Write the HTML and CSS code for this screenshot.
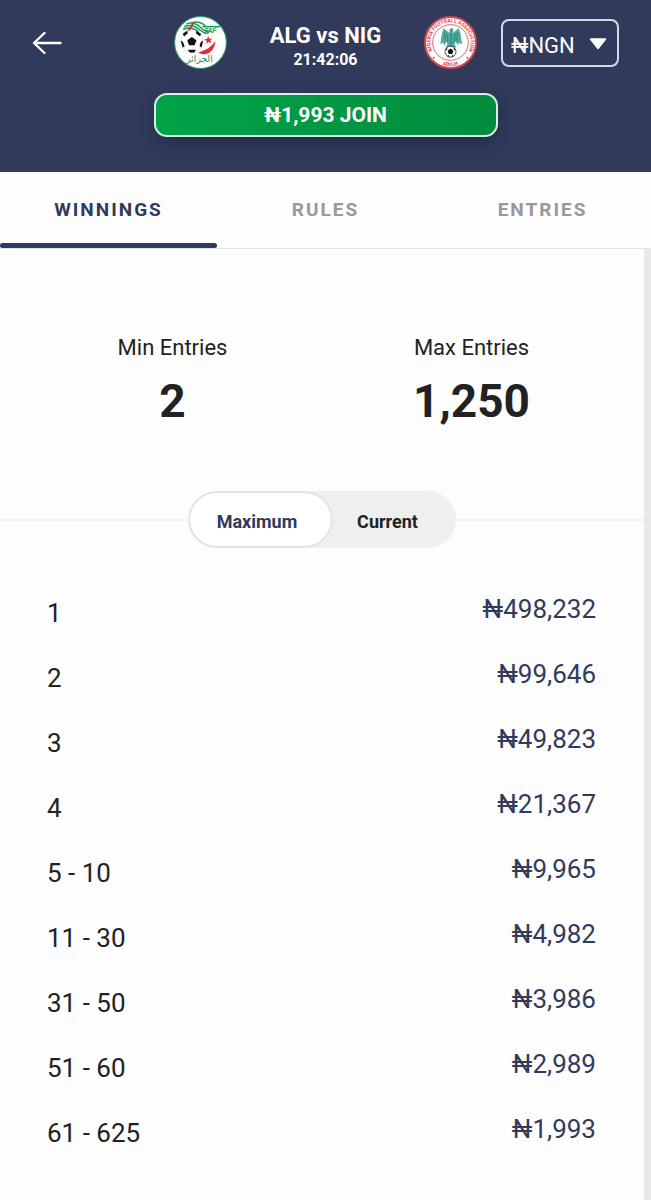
FILE: index.html
```html
<!DOCTYPE html>
<html lang="en">
<head>
    <meta charset="UTF-8">
    <meta name="viewport" content="width=device-width, initial-scale=1.0">
    <title>ALG vs NIG</title>
    <link rel="stylesheet" href="styles.css">
</head>
<body>
    <header>
        <div class="match-bar">
            <button type="button" class="back" aria-label="Back">
                <svg width="30" height="24" viewBox="0 0 30 24" fill="none" stroke="#fff" stroke-width="2.4" stroke-linecap="round" stroke-linejoin="round">
                    <path d="M28.5 12H2M12.500 2L2 12L12.500 22"/>
                </svg>
            </button>

            <div class="match">
                <svg class="crest" viewBox="0 0 52 52" role="img" aria-label="Algeria">
                    <circle cx="26" cy="26" r="25.4" fill="#fff" stroke="#2a9a6c" stroke-width="1"/>
                    <g fill="none" stroke="#1e9a59" stroke-width="1.5">
                        <path d="M12 8C18 5 23 8 27 12S33 15 34 15"/>
                        <path d="M10 10.500C17 8 21 10 26 14S31 17 34 16.500"/>
                        <path d="M9 13C16 10.500 20 12 24 15.500"/>
                        <path d="M17 6.500C23 5 28 7 31 10"/>
                    </g>
                    <text x="30" y="17" class="faf">FAF</text>
                    <path d="M28 10.500L45 10.500" stroke="#1e9a59" stroke-width="1.500"/>
                    <path d="M19 7L14 15" stroke="#e0303a" stroke-width="2"/>
                    <circle cx="17.500" cy="25" r="11" fill="#fff" stroke="#c9cfcd" stroke-width=".5"/>
                    <g fill="#111">
                        <path d="M17.500 20.500L22 23.700L20.300 28.700H14.700L13 23.700Z"/>
                        <path d="M8.500 17.500L13 14.500L13.500 17L10 20Z"/>
                        <path d="M22 14.500L26.500 17.500L25.500 20L21.500 17Z"/>
                        <path d="M6.500 24L8.800 25.500L10.500 30L8.500 31Z"/>
                        <path d="M28.500 24L26.300 25.500L25 29.500L27 31Z"/>
                        <path d="M13.500 33H21.500L20 35.800H15.500Z"/>
                    </g>
                    <path d="M24 35.500C31 34 37 30 40.500 24.500C40.500 32 35 38 29 37.500C26 37.300 25 36.500 24 35.500Z" fill="#e0303a"/>
                    <path d="M33.500 19.500L34.700 22.200L37.500 22L35.700 24L37 26.600L34.200 25.500L32 27.400L32.200 24.500L29.700 23L32.600 22.400Z" fill="#e0303a"/>
                    <text x="25" y="45" class="crest-arabic">الجزائر</text>
                </svg>

                <div class="match-info">
                    <h1>ALG vs NIG</h1>
                    <p>21:42:06</p>
                </div>

                <svg class="crest" viewBox="0 0 52 52" role="img" aria-label="Nigeria">
                    <defs>
                        <path id="ring-top" d="M12.800 40.600A19.700 19.700 0 1 1 39.200 40.600"/>
                        <path id="ring-bottom" d="M12 44.400A23.300 23.300 0 0 0 40 44.400"/>
                    </defs>
                    <circle cx="26" cy="26" r="25" fill="#fff" stroke="#d8444f" stroke-width="2"/>
                    <circle cx="26" cy="26" r="17.500" fill="#fff" stroke="#d8444f" stroke-width=".8"/>
                    <text class="ring-text"><textPath href="#ring-top" startOffset="50%">NIGERIA FOOTBALL ASSOCIATION</textPath></text>
                    <text class="ring-text"><textPath href="#ring-bottom" startOffset="50%">ABUJA</textPath></text>
                    <circle cx="9.500" cy="41" r="1" fill="#d8444f"/>
                    <circle cx="42.500" cy="41" r="1" fill="#d8444f"/>
                    <g fill="#4fa99b">
                        <path d="M25 13L28 11.500L29 14L28 17L34 12L35.500 16L36.500 22L37.500 28L34.500 26L33.500 29L31 25L30 28L32 31H21L23 28L22 25L20 29L18.500 26L16 28L17 21L18 16L19.500 12L25 17Z"/>
                    </g>
                    <path d="M20 16L21 24M22.500 17L23.500 25M33 16L32 24M30.500 17L29.500 25M26.500 15V30" stroke="#29796e" stroke-width=".7"/>
                    <circle cx="26" cy="35" r="5.400" fill="#fff" stroke="#222" stroke-width=".8"/>
                    <path d="M26 32L28.800 34L27.800 37.200H24.200L23.200 34ZM21 33L23 31L22.500 33.500ZM31 33L29 31L29.500 33.500ZM23 39.500L24 38L25 40ZM29 39.500L28 38L27 40Z" fill="#111"/>
                </svg>
            </div>

            <div class="currency">
                <select aria-label="Currency">
                    <option>₦NGN</option>
                </select>
                <svg width="18" height="12" viewBox="0 0 18 12"><path d="M1.500 1H16.500L9 10.500Z" fill="#fff" stroke="#fff" stroke-width="1.500" stroke-linejoin="round"/></svg>
            </div>
        </div>

        <button type="button" class="join">₦1,993 JOIN</button>
    </header>

    <nav>
        <a href="#winnings" class="active">WINNINGS</a>
        <a href="#rules">RULES</a>
        <a href="#entries">ENTRIES</a>
    </nav>

    <main id="winnings">
        <div class="entries">
            <div>
                <h2>Min Entries</h2>
                <p>2</p>
            </div>
            <div>
                <h2>Max Entries</h2>
                <p>1,250</p>
            </div>
        </div>

        <div class="divider">
            <div class="toggle">
                <button type="button" class="selected">Maximum</button>
                <button type="button">Current</button>
            </div>
        </div>

        <table class="prizes">
            <tr><th scope="row">1</th><td>₦498,232</td></tr>
            <tr><th scope="row">2</th><td>₦99,646</td></tr>
            <tr><th scope="row">3</th><td>₦49,823</td></tr>
            <tr><th scope="row">4</th><td>₦21,367</td></tr>
            <tr><th scope="row">5 - 10</th><td>₦9,965</td></tr>
            <tr><th scope="row">11 - 30</th><td>₦4,982</td></tr>
            <tr><th scope="row">31 - 50</th><td>₦3,986</td></tr>
            <tr><th scope="row">51 - 60</th><td>₦2,989</td></tr>
            <tr><th scope="row">61 - 625</th><td>₦1,993</td></tr>
        </table>
    </main>
</body>
</html>
```
FILE: styles.css
```css
/* Basic Reset */
* {
    margin: 0;
    padding: 0;
    box-sizing: border-box;
}

body {
    display: flex;
    flex-direction: column;
    min-height: 100vh;
    font-family: Roboto, "Noto Sans", sans-serif;
    background-color: #fdfdfd;
    color: #222;
}

button, select {
    font-family: inherit;
    cursor: pointer;
}

/* Header */
header {
    background-color: #313a5b;
    color: #fff;
    padding: 15px 32px 35px;
    text-align: center;
}

.match-bar {
    display: grid;
    grid-template-columns: 1fr auto 1fr;
    align-items: center;
}

.back {
    justify-self: start;
    background: none;
    border: none;
}

.back svg {
    display: block;
}

.match {
    display: flex;
    align-items: center;
    gap: 43px;
}

.crest {
    width: 53px;
    height: 53px;
}

.match-info {
    padding-top: 7px;
}

.match-info h1 {
    font-size: 22px;
    line-height: 28px;
    font-weight: bold;
}

.match-info p {
    font-size: 16px;
    line-height: 20px;
    font-weight: bold;
}

.faf {
    font-size: 7px;
    font-weight: bold;
    font-style: italic;
    fill: #1e9a59;
}

.crest-arabic {
    font-family: "DejaVu Sans", sans-serif;
    font-size: 9px;
    text-anchor: middle;
    fill: #1e8a52;
}

.ring-text {
    font-size: 5px;
    font-weight: bold;
    text-anchor: middle;
    fill: #d8444f;
}

.currency {
    justify-self: end;
    position: relative;
}

.currency select {
    appearance: none;
    width: 118px;
    height: 48px;
    padding: 5px 0 0 8px;
    font-size: 22px;
    color: #fff;
    background-color: transparent;
    border: 2px solid #d5d9e4;
    border-radius: 8px;
}

.currency svg {
    position: absolute;
    right: 12px;
    top: 19px;
    pointer-events: none;
}

.join {
    width: 344px;
    max-width: 100%;
    height: 44px;
    margin-top: 23px;
    font-size: 21px;
    font-weight: bold;
    color: #fff;
    background: linear-gradient(to right, #02a348, #018c3e);
    border: 2px solid #d5f0e4;
    border-radius: 13px;
    box-shadow: 0 6px 14px rgba(20, 24, 50, 0.4);
}

/* Tabs */
nav {
    display: flex;
    border-bottom: 1px solid #e3e3e5;
}

nav a {
    flex: 1;
    height: 76px;
    line-height: 76px;
    text-align: center;
    text-decoration: none;
    font-size: 19px;
    font-weight: bold;
    letter-spacing: 2px;
    color: #999;
}

nav a.active {
    position: relative;
    color: #313a5b;
}

nav a.active::after {
    content: "";
    position: absolute;
    left: 0;
    right: 0;
    bottom: 0;
    height: 5px;
    border-radius: 3px;
    background-color: #313a5b;
}

/* Winnings */
main {
    flex: 1;
    border-right: 7px solid #e8e8e8;
    padding-top: 84px;
}

.entries {
    display: grid;
    grid-template-columns: 1fr 1fr;
    padding: 0 23px;
    text-align: center;
}

.entries h2 {
    font-size: 22px;
    line-height: 30px;
    font-weight: normal;
}

.entries p {
    margin-top: 10px;
    font-size: 46px;
    line-height: 56px;
    font-weight: bold;
}

.divider {
    display: flex;
    align-items: center;
    margin-top: 62px;
}

.divider::before,
.divider::after {
    content: "";
    flex: 1;
    height: 2px;
    background-color: #f0f0f1;
}

.toggle {
    display: flex;
    width: 268px;
    height: 57px;
    padding: 2px;
    border-radius: 29px;
    background-color: #efefef;
}

.toggle button {
    flex: 1;
    padding: 4px 10px 0 0;
    font-size: 18px;
    font-weight: bold;
    color: #222;
    background: none;
    border: none;
    border-radius: 27px;
}

.toggle button.selected {
    flex: none;
    width: 141px;
    padding-right: 7px;
    color: #313a5b;
    background-color: #fff;
    box-shadow: 0 0 3px rgba(0, 0, 0, 0.2);
}

.prizes {
    width: 100%;
    margin-top: 29px;
    border-collapse: collapse;
    font-size: 26px;
    line-height: 32px;
}

.prizes th {
    height: 65px;
    padding: 20px 0 13px 47px;
    text-align: left;
    font-weight: normal;
}

.prizes td {
    padding: 16px 48px 17px 0;
    text-align: right;
    color: #313a5b;
}
```
